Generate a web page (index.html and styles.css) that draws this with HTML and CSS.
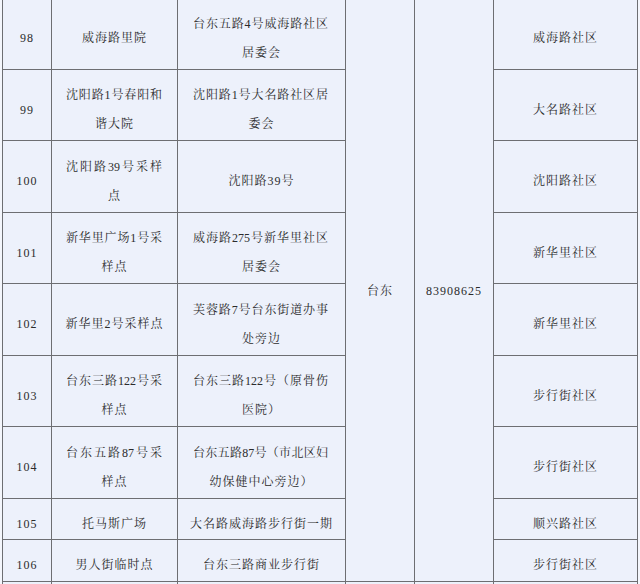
FILE: index.html
```html
<!DOCTYPE html>
<html lang="zh">
<head>
<meta charset="utf-8">
<link rel="stylesheet" href="styles.css">
</head>
<body>
<table class="sheet">
  <colgroup>
    <col class="c-no"><col class="c-site"><col class="c-addr"><col class="c-street"><col class="c-tel"><col class="c-comm">
  </colgroup>
  <tbody>
    <tr class="tall">
      <td class="num">98</td>
      <td><span class="ln">威海路里院</span></td>
      <td><span class="jl a">台东五路4号威海路社区</span><span class="ln">居委会</span></td>
      <td class="merge" rowspan="9">台东</td>
      <td class="merge num" rowspan="9">83908625</td>
      <td><span class="ln">威海路社区</span></td>
    </tr>
    <tr class="tall">
      <td class="num">99</td>
      <td><span class="jl s">沈阳路1号春阳和</span><span class="ln">谐大院</span></td>
      <td><span class="jl a">沈阳路1号大名路社区居</span><span class="ln">委会</span></td>
      <td><span class="ln">大名路社区</span></td>
    </tr>
    <tr class="tall">
      <td class="num">100</td>
      <td><span class="jl s">沈阳路39号采样</span><span class="ln">点</span></td>
      <td><span class="ln">沈阳路39号</span></td>
      <td><span class="ln">沈阳路社区</span></td>
    </tr>
    <tr class="tall">
      <td class="num">101</td>
      <td><span class="jl s">新华里广场1号采</span><span class="ln">样点</span></td>
      <td><span class="jl a">威海路275号新华里社区</span><span class="ln">居委会</span></td>
      <td><span class="ln">新华里社区</span></td>
    </tr>
    <tr class="tall">
      <td class="num">102</td>
      <td><span class="ln">新华里2号采样点</span></td>
      <td><span class="jl a">芙蓉路7号台东街道办事</span><span class="ln">处旁边</span></td>
      <td><span class="ln">新华里社区</span></td>
    </tr>
    <tr class="tall">
      <td class="num">103</td>
      <td><span class="jl s">台东三路122号采</span><span class="ln">样点</span></td>
      <td><span class="jl a">台东三路122号（原骨伤</span><span class="ln">医院）</span></td>
      <td><span class="ln">步行街社区</span></td>
    </tr>
    <tr class="tall">
      <td class="num">104</td>
      <td><span class="jl s">台东五路87号采</span><span class="ln">样点</span></td>
      <td><span class="jl a">台东五路87号（市北区妇</span><span class="ln">幼保健中心旁边）</span></td>
      <td><span class="ln">步行街社区</span></td>
    </tr>
    <tr class="short">
      <td class="num">105</td>
      <td><span class="ln">托马斯广场</span></td>
      <td><span class="ln">大名路威海路步行街一期</span></td>
      <td><span class="ln">顺兴路社区</span></td>
    </tr>
    <tr class="short">
      <td class="num">106</td>
      <td><span class="ln">男人街临时点</span></td>
      <td><span class="ln">台东三路商业步行街</span></td>
      <td><span class="ln">步行街社区</span></td>
    </tr>
    <tr class="tail">
      <td></td><td></td><td></td><td></td><td></td><td></td>
    </tr>
  </tbody>
</table>
</body>
</html>
```
FILE: styles.css
```css
html, body {
  margin: 0;
  padding: 0;
  background: #f4f6fc;
  overflow: hidden;
}

.sheet {
  border-collapse: collapse;
  table-layout: fixed;
  width: 636px;
  margin: -3px 0 0 2px;
  background: #edf1fb;
  font-family: "Liberation Serif", "Noto Serif CJK SC", "Noto Sans CJK SC", serif;
  font-size: 12px;
  color: #2b2b2b;
}

.c-no { width: 49px; }
.c-site { width: 126px; }
.c-addr { width: 168px; }
.c-street { width: 69px; }
.c-tel { width: 79px; }
.c-comm { width: 144px; }

.sheet td {
  border: 1px solid #6d6e72;
  padding: 11px 0 0;
  text-align: center;
  vertical-align: middle;
  line-height: 29px;
}

.tall td { height: 59.5px; }
.short td { height: 29.5px; }
.tail td { height: 30px; }

.sheet td.merge {
  padding-top: 5px;
  letter-spacing: 1px;
}

.num {
  letter-spacing: 1px;
}

.ln {
  display: block;
  white-space: nowrap;
  letter-spacing: 1px;
}

.jl {
  display: block;
  white-space: nowrap;
  text-align: justify;
  text-align-last: justify;
  text-justify: inter-character;
}

.jl.s { margin: 0 15px 0 14px; }
.jl.a { margin: 0 17px 0 15px; }
```
